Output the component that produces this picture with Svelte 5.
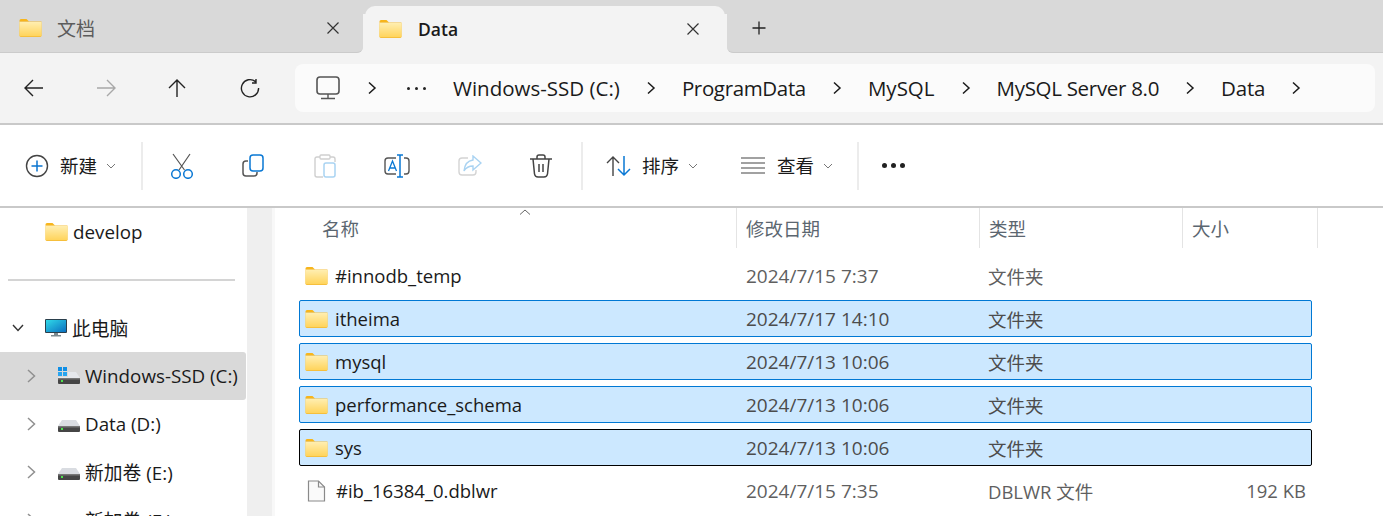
<script>
  const crumbs = [
    { t: 'Windows-SSD (C:)', ls: 0 },
    { t: 'ProgramData', ls: -0.35 },
    { t: 'MySQL', ls: 0 },
    { t: 'MySQL Server 8.0', ls: -0.3 },
    { t: 'Data', ls: -0.2 }
  ];
  const files = [
    { name: '#innodb_temp', date: '2024/7/15 7:37', type: '文件夹', size: '', kind: 'folder', sel: '' },
    { name: 'itheima', date: '2024/7/17 14:10', type: '文件夹', size: '', kind: 'folder', sel: 'sel' },
    { name: 'mysql', date: '2024/7/13 10:06', type: '文件夹', size: '', kind: 'folder', sel: 'sel' },
    { name: 'performance_schema', date: '2024/7/13 10:06', type: '文件夹', size: '', kind: 'folder', sel: 'sel' },
    { name: 'sys', date: '2024/7/13 10:06', type: '文件夹', size: '', kind: 'folder', sel: 'sel focus' },
    { name: '#ib_16384_0.dblwr', date: '2024/7/15 7:35', type: 'DBLWR 文件', size: '192 KB', kind: 'file', sel: '' }
  ];
  const drives = [
    { label: 'Windows-SSD (C:)', win: true, active: true },
    { label: 'Data (D:)' },
    { label: '新加卷 (E:)' },
    { label: '新加卷 (F:)' }
  ];
</script>

{#snippet folder()}
  <svg class="folder" width="22" height="18" viewBox="0 0 22 18">
    <path d="M0 1.5Q0 0 1.5 0H7L9.5 2.5H0Z" fill="#f7b51c"/>
    <path d="M0 2.5H22V16.5Q22 18 20.5 18H1.5Q0 18 0 16.5Z" fill="#f6bf3c"/>
    <rect x="0" y="3" width="22" height="14" fill="url(#fg)"/>
    <defs><linearGradient id="fg" x1="0" y1="0" x2="0" y2="1"><stop offset="0" stop-color="#ffeeb0"/><stop offset="1" stop-color="#ffd45c"/></linearGradient></defs>
  </svg>
{/snippet}

{#snippet drive(win)}
  <span class="drive">
    <svg width="24" height="20" viewBox="0 0 24 20">
      {#if win}
        <rect x="1" y="1" width="4" height="4" fill="#0f8fe6"/><rect x="6" y="1" width="4" height="4" fill="#0f8fe6"/>
        <rect x="1" y="6" width="4" height="4" fill="#27a4f0"/><rect x="6" y="6" width="4" height="4" fill="#27a4f0"/>
        <path d="M11 6H19L23 12H1V11H11Z" fill="#e6e8ec"/>
      {:else}
        <path d="M5 6H19L23 12H1Z" fill="#d9dce1"/>
      {/if}
      <rect x="1" y="12" width="22" height="6" rx="1" fill="#454545"/>
      <rect x="1" y="12" width="22" height="1.5" fill="#777"/>
      <rect x="4" y="14" width="2" height="2" fill="#4ce34c"/>
    </svg>
  </span>
{/snippet}

{#snippet chev()}
  <svg class="chev" width="10" height="14" viewBox="0 0 10 14"><path d="M2 1.5L8 7L2 12.5" fill="none" stroke="#1a1a1a" stroke-width="1.5"/></svg>
{/snippet}

{#snippet down()}
  <svg class="down" width="10" height="6" viewBox="0 0 10 6"><path d="M1 1L5 5L9 1" fill="none" stroke="#777" stroke-width="1"/></svg>
{/snippet}

{#snippet closeX()}
  <svg class="x" width="14" height="14" viewBox="0 0 14 14"><path d="M1.5 1.5L12.5 12.5M12.5 1.5L1.5 12.5" fill="none" stroke="#333" stroke-width="1.2"/></svg>
{/snippet}

<div class="win">
  <div class="tabs">
    <div class="tab idle">
      {@render folder()}
      <span class="tab-t">文档</span>
      {@render closeX()}
    </div>
    <div class="slot">
      <div class="tab on">
        {@render folder()}
        <span class="tab-t">Data</span>
        {@render closeX()}
      </div>
    </div>
    <div class="rest">
      <svg class="plus" width="16" height="16" viewBox="0 0 16 16"><path d="M8 1.5V14.5M1.5 8H14.5" stroke="#222" stroke-width="1.3"/></svg>
    </div>
  </div>

  <div class="nav">
    <div class="nav-btns">
      <svg width="22" height="20" viewBox="0 0 22 20"><path d="M20 10H2M10 2L2 10L10 18" fill="none" stroke="#222" stroke-width="1.4"/></svg>
      <svg width="22" height="20" viewBox="0 0 22 20"><path d="M2 10H20M12 2L20 10L12 18" fill="none" stroke="#a8a8a8" stroke-width="1.4"/></svg>
      <svg width="20" height="20" viewBox="0 0 20 20"><path d="M10 19V2M2 10L10 2L18 10" fill="none" stroke="#222" stroke-width="1.4"/></svg>
      <svg class="refresh" width="20" height="20" viewBox="0 0 20 20"><path d="M15.5 3.6A8.6 8.6 0 1 0 18.6 10M16 1V5H12" fill="none" stroke="#222" stroke-width="1.4"/></svg>
    </div>
    <div class="path">
      <svg class="pc" width="24" height="24" viewBox="0 0 24 24"><rect x="1" y="1" width="22" height="17" rx="3" fill="none" stroke="#555" stroke-width="1.6"/><path d="M12 18V22M5 22.5H19" stroke="#555" stroke-width="1.4"/></svg>
      {@render chev()}
      <span class="dots"><b></b><b></b><b></b></span>
      {#each crumbs as c}
        <span class="crumb" style="letter-spacing: {c.ls}px">{c.t}</span>
        {@render chev()}
      {/each}
    </div>
  </div>

  <div class="bar">
    <div class="tool new">
      <svg width="24" height="24" viewBox="0 0 24 24"><circle cx="12" cy="12" r="10.5" fill="none" stroke="#444" stroke-width="1.4"/><path d="M12 6.5V17.5M6.5 12H17.5" stroke="#0a74d0" stroke-width="1.5"/></svg>
      <span class="lbl">新建</span>
      {@render down()}
    </div>
    <i class="sep"></i>
    <div class="icons">
      <svg width="24" height="26" viewBox="0 0 24 26"><path d="M3 1L14.5 17M20 1L9 17" fill="none" stroke="#555" stroke-width="1.2"/><circle cx="6" cy="21" r="4.3" fill="none" stroke="#0a78d4" stroke-width="1.5"/><circle cx="18" cy="21" r="4.3" fill="none" stroke="#0a78d4" stroke-width="1.5"/></svg>
      <svg width="24" height="24" viewBox="0 0 24 24"><path d="M6 7H4Q1 7 1 10V19Q1 22 4 22H12Q15 22 15 19V18" fill="none" stroke="#555" stroke-width="1.5"/><rect x="8" y="1" width="13" height="16" rx="3" fill="none" stroke="#0a78d4" stroke-width="1.5"/></svg>
      <svg width="22" height="24" viewBox="0 0 22 24"><path d="M6 3H3Q1 3 1 5V21Q1 23 3 23H9M16 3H19Q21 3 21 5V8" fill="none" stroke="#cfcfcf" stroke-width="1.4"/><rect x="6" y="1" width="10" height="4" rx="1" fill="none" stroke="#cfcfcf" stroke-width="1.3"/><rect x="10" y="9" width="11" height="14" rx="2" fill="none" stroke="#a9d3f2" stroke-width="1.5"/></svg>
      <svg width="26" height="24" viewBox="0 0 26 24"><path d="M12 4H4Q1 4 1 7V17Q1 20 4 20H12M20 4H22Q25 4 25 7V17Q25 20 22 20H20" fill="none" stroke="#555" stroke-width="1.4"/><path d="M4.5 17L8.5 7L12.5 17M6 14H11" fill="none" stroke="#0a78d4" stroke-width="1.3"/><path d="M13 1H19M16 1V23M13 23H19" fill="none" stroke="#0a78d4" stroke-width="1.5"/></svg>
      <svg width="24" height="22" viewBox="0 0 24 22"><path d="M10 3H4Q1 3 1 6V17Q1 20 4 20H15Q18 20 18 17V15" fill="none" stroke="#d4d4d4" stroke-width="1.4"/><path d="M15 1L23 8L15 15V11Q9 11 6 16Q7 6 15 5Z" fill="#fff" stroke="#a9d3f2" stroke-width="1.4"/></svg>
      <svg width="22" height="24" viewBox="0 0 22 24"><path d="M0 5H22M7 5V3Q7 1 9 1H13Q15 1 15 3V5M3 5L4.5 20Q5 23 8 23H14Q17 23 17.5 20L19 5M9 10V18M13 10V18" fill="none" stroke="#444" stroke-width="1.5"/></svg>
    </div>
    <i class="sep"></i>
    <div class="tool sort">
      <svg width="26" height="22" viewBox="0 0 26 22"><path d="M7 21V2M1 8L7 2L13 8" fill="none" stroke="#444" stroke-width="1.4"/><path d="M18 1V20M12 14L18 20L24 14" fill="none" stroke="#0a78d4" stroke-width="1.5"/></svg>
      <span class="lbl">排序</span>
      {@render down()}
    </div>
    <div class="tool view">
      <svg width="24" height="17" viewBox="0 0 24 17"><path d="M0 1H24M0 6H24M0 11H24M0 16H24" stroke="#444" stroke-width="1.2"/></svg>
      <span class="lbl">查看</span>
      {@render down()}
    </div>
    <i class="sep"></i>
    <span class="more"><b></b><b></b><b></b></span>
  </div>

  <div class="body">
    <aside class="side">
      <div class="s-row dev">{@render folder()}<span>develop</span></div>
      <hr />
      <div class="s-row pcrow">
        <svg class="tw" width="12" height="8" viewBox="0 0 12 8"><path d="M1 1L6 6.5L11 1" fill="none" stroke="#333" stroke-width="1.4"/></svg>
        <svg width="22" height="18" viewBox="0 0 22 18"><rect x="0" y="0" width="22" height="14" rx="1" fill="#2a3f4c"/><rect x="1" y="1" width="20" height="12" fill="url(#sc)"/><rect x="9" y="14" width="4" height="2" fill="#7d8a90"/><rect x="6" y="16" width="10" height="1.5" fill="#7d8a90"/><defs><linearGradient id="sc" x1="0" y1="0" x2="1" y2="1"><stop offset="0" stop-color="#30d9e8"/><stop offset="1" stop-color="#0a6fc0"/></linearGradient></defs></svg>
        <span>此电脑</span>
      </div>
      {#each drives as d}
        <div class="s-row drv" class:active={d.active}>
          <svg class="tw2" width="9" height="14" viewBox="0 0 9 14"><path d="M1 1L7.5 7L1 13" fill="none" stroke="#909090" stroke-width="1.5"/></svg>
          {@render drive(d.win)}
          <span>{d.label}</span>
        </div>
      {/each}
    </aside>
    <div class="track"></div>

    <section class="list">
      <div class="head">
        <span class="h name">名称<svg class="caret" width="12" height="6" viewBox="0 0 12 6"><path d="M1 5.5L6 1L11 5.5" fill="none" stroke="#666"/></svg></span>
        <span class="h date">修改日期</span>
        <span class="h type">类型</span>
        <span class="h size">大小</span>
      </div>
      <div class="rows">
        {#each files as f}
          <div class="row {f.sel}">
            <span class="c-name">
              {#if f.kind === 'folder'}
                {@render folder()}
              {:else}
                <svg class="doc" width="18" height="22" viewBox="0 0 18 22"><path d="M1 1H11L17 7V21H1Z" fill="#fafafa" stroke="#8a8a8a" stroke-width="1.2"/><path d="M11 1V7H17" fill="none" stroke="#8a8a8a" stroke-width="1.2"/></svg>
              {/if}
              <span>{f.name}</span>
            </span>
            <span class="c-date">{f.date}</span>
            <span class="c-type">{f.type}</span>
            <span class="c-size">{f.size}</span>
          </div>
        {/each}
      </div>
    </section>
  </div>
</div>

<style>
  :global(body) { margin: 0; background: #fff; overflow: hidden; }
  .win { width: 1383px; height: 516px; overflow: hidden; display: flex; flex-direction: column; font-family: "Open Sans", "Noto Sans CJK SC", sans-serif; font-size: 19px; color: #1a1a1a; }
  svg { flex: none; display: block; }

  .tabs { height: 53px; flex: none; background: #f3f3f3; display: flex; }
  .tab { height: 47px; box-sizing: border-box; display: flex; align-items: center; flex: none; padding-bottom: 2px; }
  .tab.idle { width: 363px; height: 53px; padding-top: 6px; padding-left: 19px; padding-right: 23px; background: #d9d9d9; border-bottom: 1px solid #cbcbcb; border-bottom-right-radius: 6px; color: #5c5c5c; }
  .slot { width: 364px; flex: none; box-sizing: border-box; padding: 6px 2px 0; background: linear-gradient(#d9d9d9 14px, #f3f3f3 14px); }
  .tab.on { width: 360px; background: #f3f3f3; border-radius: 10px 10px 0 0; padding-left: 14px; padding-right: 25px; font-weight: 600; font-size: 17.5px; }
  .tab-t { margin-left: 15px; flex: 1; }
  .on .tab-t { margin-left: 16px; }
  .rest { flex: 1; background: #d9d9d9; border-bottom: 1px solid #cbcbcb; border-bottom-left-radius: 6px; box-sizing: border-box; display: flex; align-items: center; padding: 6px 0 2px 24px; }

  .nav { height: 72px; flex: none; background: #f3f3f3; border-bottom: 2px solid #c9c9c9; box-sizing: border-box; display: flex; align-items: center; padding-left: 23px; }
  .nav-btns { display: flex; align-items: center; gap: 50px; width: 272px; }
  .refresh { margin-left: 3px; }
  .path { width: 1080px; height: 48px; background: #fbfbfb; border-radius: 8px; display: flex; align-items: center; padding-left: 21px; box-sizing: border-box; }
  .chev { margin-left: 26px; }
  .pc + .chev { margin-left: 27px; }
  .dots { margin-left: 30px; display: flex; gap: 5px; width: 19px; flex: none; }
  .dots b { width: 3px; height: 3px; border-radius: 50%; background: #222; }
  .crumb { margin-left: 27px; font-size: 20.5px; white-space: nowrap; }
  .chev + .crumb { margin-left: 26px; }

  .bar { height: 83px; flex: none; background: #fff; border-bottom: 2px solid #c9c9c9; box-sizing: border-box; display: flex; align-items: center; padding-left: 25px; }
  .tool { display: flex; align-items: center; }
  .lbl { margin-left: 11px; font-size: 18.5px; padding-bottom: 2px; }
  .down { margin-left: 9px; }
  .new { width: 116px; }
  .sep { width: 2px; height: 48px; background: #ececec; flex: none; }
  .icons { display: flex; align-items: center; width: 438px; padding-left: 27px; gap: 48px; box-sizing: border-box; }
  .sort { margin-left: 23px; width: 135px; }
  .sort .lbl { margin-left: 10px; }
  .view { width: 116px; }
  .view .lbl { margin-left: 12px; }
  .more { display: flex; gap: 4px; margin-left: 23px; }
  .more b { width: 5px; height: 5px; border-radius: 50%; background: #222; }

  .body { flex: 1; min-height: 0; display: flex; overflow: hidden; }
  .side { width: 247px; flex: none; box-sizing: border-box; }
  .s-row { display: flex; align-items: center; height: 48px; font-size: 18.8px; }
  .dev { height: 47px; padding-left: 45px; gap: 5px; }
  hr { margin: 24px 12px 23px 8px; border: 0; height: 2px; background: #d4d4d4; }
  .pcrow { padding-left: 12px; }
  .pcrow .tw { margin-right: 21px; }
  .pcrow span { margin-left: 5px; }
  .drv { padding-left: 27px; }
  .drv.active { background: #d9d9d9; border-radius: 0 3px 3px 0; margin-right: 1px; }
  .tw2 { margin-right: 21px; }
  .drive { width: 28px; flex: none; }
  .track { width: 25px; flex: none; background: #efefef; border-right: 3px solid #f8f8f8; }

  .list { flex: 1; min-width: 0; }
  .head { height: 40px; display: flex; color: #5b6670; font-size: 18.5px; margin-left: 25px; }
  .h { display: flex; align-items: center; box-sizing: border-box; position: relative; padding-left: 9px; border-right: 1px solid #e4e4e4; }
  .h.name { width: 437px; padding-left: 22px; }
  .h.date { width: 243px; }
  .h.type { width: 203px; }
  .h.size { width: 135px; }
  .caret { position: absolute; left: 219px; top: 1px; }

  .rows { padding-top: 9px; margin-left: 24px; width: 1013px; }
  .row { height: 37px; box-sizing: border-box; margin-bottom: 6px; display: flex; align-items: center; border: 1px solid transparent; border-radius: 2px; font-size: 18.5px; }
  .row.sel { background: #cce8ff; border-color: #0078d4; }
  .row.focus { border-color: #000; }
  .c-name { width: 446px; display: flex; align-items: center; padding-left: 5px; box-sizing: border-box; }
  .c-name span { margin-left: 7px; }
  .folder { width: 23px; height: 18px; }
  .doc { margin: 0 3px 0 2px; width: 19px; }
  .c-date { width: 242px; color: #5f5f5f; font-size: 19px; }
  .sel .c-date, .sel .c-type { color: #4c4c4c; }
  .c-type { width: 201px; color: #5f5f5f; }
  .c-size { width: 117px; text-align: right; color: #5f5f5f; }
</style>
